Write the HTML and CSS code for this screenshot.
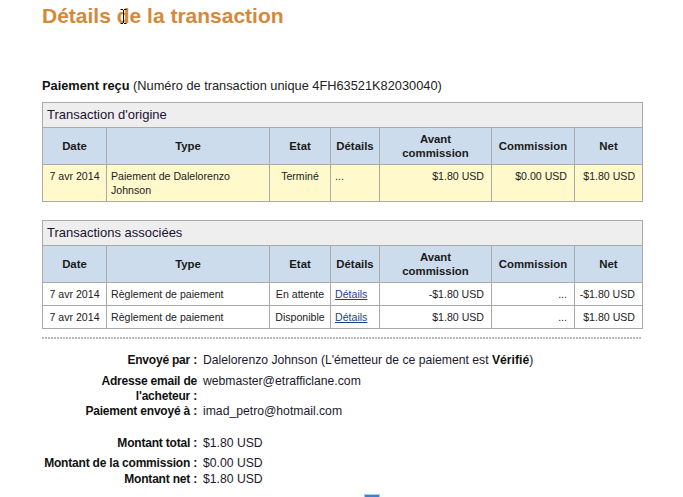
FILE: index.html
```html
<!DOCTYPE html>
<html lang="fr">
<head>
<meta charset="utf-8">
<title>Détails de la transaction</title>
<link rel="stylesheet" href="styles.css">
</head>
<body>
<div class="page">
  <h1 class="title">Détails de la transaction</h1>
  <svg class="cursor" width="7" height="15" viewBox="0 0 7 15" aria-hidden="true">
    <path d="M0.5 0.5h2.5M4 0.5h2.5M3.5 1v13M0.5 14.5h2.5M4 14.5h2.5" stroke="#000" stroke-width="1" fill="none"/>
  </svg>

  <p class="summary"><b>Paiement reçu</b> (Numéro de transaction unique 4FH63521K82030040)</p>

  <table class="tx">
    <colgroup>
      <col class="c-date"><col class="c-type"><col class="c-etat"><col class="c-det"><col class="c-avant"><col class="c-com"><col class="c-net">
    </colgroup>
    <tr class="cap"><td colspan="7">Transaction d'origine</td></tr>
    <tr class="head">
      <th>Date</th><th>Type</th><th>Etat</th><th>Détails</th><th>Avant<br>commission</th><th>Commission</th><th>Net</th>
    </tr>
    <tr class="data yellow">
      <td class="center">7 avr 2014</td>
      <td>Paiement de Dalelorenzo Johnson</td>
      <td class="center">Terminé</td>
      <td>...</td>
      <td class="right">$1.80 USD</td>
      <td class="right">$0.00 USD</td>
      <td class="right">$1.80 USD</td>
    </tr>
  </table>

  <table class="tx second">
    <colgroup>
      <col class="c-date"><col class="c-type"><col class="c-etat"><col class="c-det"><col class="c-avant"><col class="c-com"><col class="c-net">
    </colgroup>
    <tr class="cap"><td colspan="7">Transactions associées</td></tr>
    <tr class="head">
      <th>Date</th><th>Type</th><th>Etat</th><th>Détails</th><th>Avant<br>commission</th><th>Commission</th><th>Net</th>
    </tr>
    <tr class="data">
      <td class="center">7 avr 2014</td>
      <td>Règlement de paiement</td>
      <td class="center">En attente</td>
      <td><a href="#">Détails</a></td>
      <td class="right">-$1.80 USD</td>
      <td class="right">...</td>
      <td class="right">-$1.80 USD</td>
    </tr>
    <tr class="data">
      <td class="center">7 avr 2014</td>
      <td>Règlement de paiement</td>
      <td class="center">Disponible</td>
      <td><a href="#">Détails</a></td>
      <td class="right">$1.80 USD</td>
      <td class="right">...</td>
      <td class="right">$1.80 USD</td>
    </tr>
  </table>

  <div class="divider"></div>

  <dl class="info">
    <div class="row r-sender"><dt>Envoyé par :</dt><dd>Dalelorenzo Johnson (L'émetteur de ce paiement est <b>Vérifié</b>)</dd></div>
    <div class="row"><dt>Adresse email de<br>l'acheteur :</dt><dd>webmaster@etrafficlane.com</dd></div>
    <div class="row r-to"><dt>Paiement envoyé à :</dt><dd>imad_petro@hotmail.com</dd></div>
    <div class="row r-total"><dt>Montant total :</dt><dd>$1.80 USD</dd></div>
    <div class="row r-fee"><dt>Montant de la commission :</dt><dd>$0.00 USD</dd></div>
    <div class="row"><dt>Montant net :</dt><dd>$1.80 USD</dd></div>
  </dl>

  <div class="btn-icon"></div>
</div>
</body>
</html>
```

FILE: styles.css
```css
html, body {
  margin: 0;
  padding: 0;
  background: #ffffff;
}

body {
  font-family: "Liberation Sans", Arial, sans-serif;
  color: #222;
}

.page {
  position: relative;
  width: 600px;
  padding: 4px 0 0 42px;
}

.title {
  margin: 0;
  font-size: 21px;
  line-height: 24px;
  font-weight: bold;
  color: #d5883a;
}

.cursor {
  position: absolute;
  left: 120px;
  top: 9px;
}

.summary {
  margin: 50px 0 0;
  font-size: 12.8px;
  line-height: 15px;
  color: #222;
}

.summary b {
  color: #111;
}

.tx {
  margin-top: 9px;
  width: 600px;
  table-layout: fixed;
  border-collapse: collapse;
  font-family: "Liberation Sans", Arial, sans-serif;
}

.tx.second {
  margin-top: 18px;
}

.c-date { width: 64px; }
.c-type { width: 163px; }
.c-etat { width: 61px; }
.c-det { width: 49px; }
.c-avant { width: 112px; }
.c-com { width: 83px; }
.c-net { width: 68px; }

.tx td, .tx th {
  border: 1px solid #aaaaaa;
}

.cap td {
  background: #eeeeee;
  font-size: 13px;
  line-height: 16px;
  padding: 4px 5px 4px 4px;
  color: #221133;
  text-align: left;
}

.head th {
  background: #cddcec;
  font-size: 11.4px;
  line-height: 14px;
  font-weight: bold;
  padding: 4px 3px;
  text-align: center;
  vertical-align: middle;
  color: #1a1a1a;
}

.data td {
  font-size: 10.6px;
  line-height: 14px;
  padding: 4px 5px 4px 4px;
  vertical-align: top;
  text-align: left;
  color: #222;
}

.data.yellow td {
  background: #fff9cc;
}

.data td.center {
  text-align: center;
  padding-left: 2px;
  padding-right: 2px;
  white-space: nowrap;
}

.data td.right {
  text-align: right;
  padding-left: 2px;
  padding-right: 7px;
  white-space: nowrap;
}

.data a {
  color: #1d3f8f;
  text-decoration: underline;
}

.divider {
  margin-top: 8px;
  height: 2px;
  background-image: linear-gradient(to right, #b8b8b8 2px, transparent 2px);
  background-size: 3px 2px;
  background-repeat: repeat-x;
}

.info {
  margin: 14px 0 0;
  font-size: 12.2px;
  line-height: 15px;
}

.row {
  display: grid;
  grid-template-columns: 155px 1fr;
  column-gap: 6px;
}

.row dt {
  font-size: 12px;
  font-weight: bold;
  text-align: right;
  white-space: nowrap;
  letter-spacing: -0.2px;
  color: #111;
}

.row dd {
  margin: 0;
  color: #22182c;
}

.row dd b {
  color: #111;
}

.r-sender {
  margin-bottom: 6px;
}

.r-to {
  margin-bottom: 17px;
}

.r-total {
  margin-bottom: 5px;
}

.r-fee {
  margin-bottom: 1px;
}

.btn-icon {
  margin: 7px 0 0 322px;
  width: 14px;
  height: 14px;
  background: #3f7fd0;
  border: 1px solid #a9c8ee;
}
```
